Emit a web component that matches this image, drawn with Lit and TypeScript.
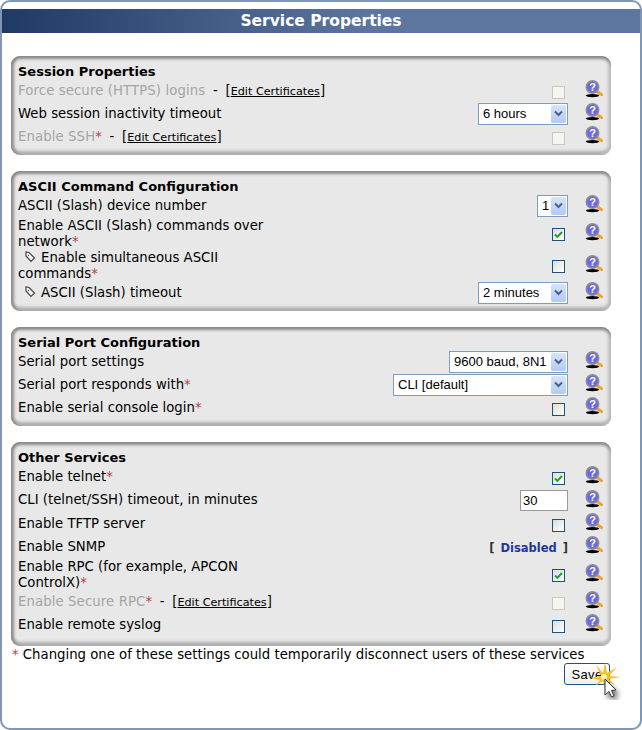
import { LitElement, html, css, nothing } from 'lit'
import { customElement } from 'lit/decorators.js'

type Control =
  | { kind: 'check'; on?: boolean; disabled?: boolean }
  | { kind: 'select'; value: string; width: number }
  | { kind: 'input'; value: string }
  | { kind: 'status'; value: string }

interface Row {
  label: string
  star?: boolean
  muted?: boolean
  sub?: boolean
  wrap?: boolean
  certs?: boolean
  control: Control
}

const PANELS: { title: string; rows: Row[] }[] = [
  {
    title: 'Session Properties',
    rows: [
      { label: 'Force secure (HTTPS) logins', muted: true, certs: true, control: { kind: 'check', disabled: true } },
      { label: 'Web session inactivity timeout', control: { kind: 'select', value: '6 hours', width: 90 } },
      { label: 'Enable SSH', star: true, muted: true, certs: true, control: { kind: 'check', disabled: true } },
    ],
  },
  {
    title: 'ASCII Command Configuration',
    rows: [
      { label: 'ASCII (Slash) device number', control: { kind: 'select', value: '1', width: 31 } },
      { label: 'Enable ASCII (Slash) commands over network', star: true, wrap: true, control: { kind: 'check', on: true } },
      { label: 'Enable simultaneous ASCII commands', star: true, sub: true, wrap: true, control: { kind: 'check' } },
      { label: 'ASCII (Slash) timeout', sub: true, control: { kind: 'select', value: '2 minutes', width: 90 } },
    ],
  },
  {
    title: 'Serial Port Configuration',
    rows: [
      { label: 'Serial port settings', control: { kind: 'select', value: '9600 baud, 8N1', width: 119 } },
      { label: 'Serial port responds with', star: true, control: { kind: 'select', value: 'CLI [default]', width: 175 } },
      { label: 'Enable serial console login', star: true, control: { kind: 'check' } },
    ],
  },
  {
    title: 'Other Services',
    rows: [
      { label: 'Enable telnet', star: true, control: { kind: 'check', on: true } },
      { label: 'CLI (telnet/SSH) timeout, in minutes', control: { kind: 'input', value: '30' } },
      { label: 'Enable TFTP server', control: { kind: 'check' } },
      { label: 'Enable SNMP', control: { kind: 'status', value: 'Disabled' } },
      { label: 'Enable RPC (for example, APCON ControlX)', star: true, wrap: true, control: { kind: 'check', on: true } },
      { label: 'Enable Secure RPC', star: true, muted: true, certs: true, control: { kind: 'check', disabled: true } },
      { label: 'Enable remote syslog', control: { kind: 'check' } },
    ],
  },
]

const helpIcon = html`<svg class="help" width="18" height="18" viewBox="0 0 18 18">
  <ellipse cx="7.5" cy="15.6" rx="6.8" ry="1.6" fill="#000"></ellipse>
  <path d="M11.5 11l5 3.6" stroke="#f2a12e" stroke-width="3" stroke-linecap="round"></path>
  <circle cx="7.5" cy="7" r="6.2" fill="#6a68e6" stroke="#8f8f8f" stroke-width="1.6"></circle>
  <text x="7.5" y="11" text-anchor="middle" class="q">?</text>
</svg>`

const tagIcon = html`<svg class="tag" width="12" height="12" viewBox="0 0 12 12">
  <path d="M2 1v4l5 5.5 3.5-3.5L5 1.5z" fill="#f4f4f4" stroke="#444" stroke-width="1.2"></path>
  <path d="M4 4l1 1" stroke="#444" stroke-width="1"></path>
</svg>`

@customElement('app-root')
export class AppRoot extends LitElement {
  static styles = css`
    :host {
      display: block;
      font-family: 'DejaVu Sans', Verdana, sans-serif;
      font-size: 13.28px;
      color: #000;
    }
    .frame {
      position: relative;
      box-sizing: border-box;
      height: 730px;
      width: 642px;
      padding-top: 7px;
      border: 2px solid #7f96b6;
      border-radius: 10px;
      background: #fff;
      overflow: hidden;
    }
    .header {
      height: 24px;
      line-height: 25px;
      text-align: center;
      color: #fff;
      font-size: 15.5px;
      font-weight: bold;
      background: linear-gradient(90deg, #1f3a64 0%, #5d76a0 58%, #5d76a0 100%);
    }
    .panels {
      display: flex;
      flex-direction: column;
      gap: 16px;
      margin: 23px 29px 0 9px;
    }
    .panel {
      padding: 7px 0;
      border-radius: 9px;
      background: #e8e8e8;
      box-shadow:
        inset 0 4px 3px -1px #8a8a8a,
        inset 4px 0 3px -1px #8f8f8f,
        inset -4px 0 3px -1px #c0c0c0,
        inset 0 -5px 3px -1px #b0b0b0;
    }
    .panel:last-child {
      padding-bottom: 10px;
    }
    .title {
      padding: 1px 0 0 7px;
      margin-bottom: -1px;
      font-size: 13px;
      font-weight: bold;
      line-height: 16px;
    }
    .row {
      display: flex;
      align-items: center;
      min-height: 23px;
      padding: 0 8px 0 7px;
      line-height: 16px;
    }
    .row.tall {
      min-height: 24px;
    }
    .label {
      flex: 1;
      white-space: nowrap;
    }
    .label.wrap {
      flex: 0 0 262px;
      white-space: normal;
    }
    .label.low {
      margin: 1px 0 -1px;
    }
    .muted {
      color: #a5a5a5;
      letter-spacing: 0.1px;
    }
    .star {
      color: #b5403f;
    }
    .tag {
      margin: 0 5px 0 6px;
      vertical-align: -1px;
    }
    .certs {
      word-spacing: 3.5px;
    }
    .certs a {
      font-size: 11.2px;
      color: #000;
      text-decoration: underline;
      word-spacing: 0;
    }
    .control {
      margin-left: auto;
      display: flex;
      align-items: center;
      justify-content: flex-end;
    }
    .help {
      flex: none;
      margin-left: 17px;
      margin-top: -3px;
    }
    .q {
      font: bold 11px 'Liberation Sans', sans-serif;
      fill: #fff;
    }
    .box {
      box-sizing: border-box;
      width: 13px;
      height: 13px;
      margin: 3px 3px 0 0;
      border: 1px solid #1c5180;
      background: linear-gradient(135deg, #dcdcd7, #fff);
    }
    .box.disabled {
      border-color: #cac8bb;
      background: #f5f5f3;
    }
    .box svg {
      display: block;
    }
    .select {
      position: relative;
      display: block;
      height: 22px;
    }
    select {
      box-sizing: border-box;
      width: 100%;
      height: 22px;
      padding: 0 0 0 4px;
      appearance: none;
      border: 1px solid #7f9db9;
      border-radius: 0;
      background: #fff;
      color: #000;
      font-family: 'Liberation Sans', Arial, sans-serif;
      font-size: 13px;
    }
    .arrow {
      position: absolute;
      top: 2px;
      right: 2px;
      width: 15px;
      height: 18px;
      border-radius: 2px;
      background: linear-gradient(180deg, #d6e3fb, #b3c9f5);
      display: flex;
      align-items: center;
      justify-content: center;
      pointer-events: none;
    }
    input {
      box-sizing: border-box;
      width: 48px;
      height: 21px;
      padding: 0 2px;
      border: 1px solid #9a9a9a;
      background: #fff;
      font-family: 'Liberation Sans', Arial, sans-serif;
      font-size: 13px;
    }
    .status {
      display: flex;
      gap: 6px;
      margin-top: 2px;
      color: #333;
      font-weight: bold;
      font-size: 11.5px;
    }
    .status b {
      color: #1f3a93;
    }
    .note {
      margin: 1px 0 0 10px;
      line-height: 16px;
    }
    .actions {
      display: flex;
      justify-content: flex-end;
      margin: 0 30px 0 0;
    }
    button {
      width: 46px;
      height: 22px;
      padding: 0;
      border: 1px solid #1c5180;
      border-radius: 3px;
      background: linear-gradient(180deg, #fff, #f0f0ea);
      font-family: 'Liberation Sans', Arial, sans-serif;
      font-size: 13px;
      letter-spacing: 0.4px;
      color: #000;
    }
    .cursor {
      position: absolute;
      left: 582px;
      top: 652px;
    }
  `

  private renderControl(c: Control) {
    switch (c.kind) {
      case 'check':
        return html`<span class="box ${c.disabled ? 'disabled' : ''}">
          ${c.on
            ? html`<svg width="11" height="11" viewBox="0 0 11 11"><path d="M2 5.5l2.4 2.4L9 3" fill="none" stroke="#21a121" stroke-width="2"></path></svg>`
            : nothing}
        </span>`
      case 'select':
        return html`<span class="select" style="width:${c.width}px">
          <select><option>${c.value}</option></select>
          <span class="arrow">
            <svg width="9" height="7" viewBox="0 0 9 7"><path d="M1 1.5l3.5 3.5L8 1.5" fill="none" stroke="#4d6185" stroke-width="2"></path></svg>
          </span>
        </span>`
      case 'input':
        return html`<input type="text" .value=${c.value} />`
      case 'status':
        return html`<span class="status"><span>[</span><b>${c.value}</b><span>]</span></span>`
    }
  }

  private renderRow(r: Row) {
    return html`<div class="row ${r.control.kind === 'input' ? 'tall' : ''}">
      <div class="label ${r.wrap ? 'wrap' : ''} ${r.wrap || r.certs ? 'low' : ''}">
        ${r.sub ? tagIcon : nothing}<span class=${r.muted ? 'muted' : ''}>${r.label}</span>${r.star
          ? html`<span class="star">*</span>`
          : nothing}${r.certs
          ? html`<span class="certs"> - [<a href="#">Edit Certificates</a>]</span>`
          : nothing}
      </div>
      <div class="control">${this.renderControl(r.control)}</div>
      ${helpIcon}
    </div>`
  }

  render() {
    return html`
      <div class="frame">
        <div class="header">Service Properties</div>
        <div class="panels">
          ${PANELS.map(
            (p) => html`<section class="panel">
              <div class="title">${p.title}</div>
              ${p.rows.map((r) => this.renderRow(r))}
            </section>`,
          )}
        </div>
        <p class="note"><span class="star">*</span> Changing one of these settings could temporarily disconnect users of these services</p>
        <div class="actions"><button>Save</button></div>
        <svg class="cursor" width="40" height="46" viewBox="0 0 40 46">
          <defs>
            <filter id="soft" x="-50%" y="-50%" width="220%" height="220%">
              <feDropShadow dx="3" dy="4" stdDeviation="2.5" flood-color="#000" flood-opacity="0.55"></feDropShadow>
            </filter>
          </defs>
          <path
            d="M17 22 L12 11 L19 19 L21 8 L23 19 L33 13 L25 22 L37 23 L25 25 L31 31 L23 27 L21 35 L19 27 L11 32 L16 26 L6 24 Z"
            fill="#f3c32a"
          ></path>
          <circle cx="20" cy="23" r="3" fill="#fff3a8"></circle>
          <path
            d="M21 25 L21 41 L25 37.5 L27.5 43 L30 42 L27.5 36.5 L32 36 Z"
            fill="#fff"
            stroke="#333"
            stroke-width="1"
            filter="url(#soft)"
          ></path>
        </svg>
      </div>
    `
  }
}

declare global {
  interface HTMLElementTagNameMap {
    'app-root': AppRoot
  }
}
